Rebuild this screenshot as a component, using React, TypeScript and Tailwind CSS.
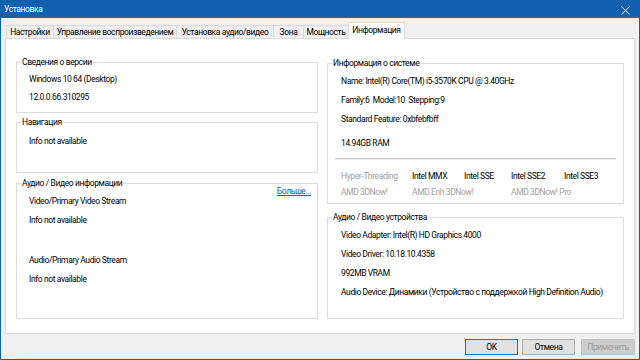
import type { ReactNode } from 'react';

const tabs = [
  { label: 'Настройки', w: 'w-[48px]' },
  { label: 'Управление воспроизведением', w: 'w-[124px]' },
  { label: 'Установка аудио/видео', w: 'w-[98px]' },
  { label: 'Зона', w: 'w-[31px]' },
  { label: 'Мощность', w: 'w-[46px]' },
];

const GroupBox = ({
  title,
  className,
  children,
}: {
  title: string;
  className: string;
  children: ReactNode;
}) => (
  <fieldset className={`min-w-0 border border-[#dcdcdc] ${className}`}>
    <legend className="ml-[4px] px-[1px] leading-[14px]">{title}</legend>
    {children}
  </fieldset>
);

const Line = ({ children, h = 'h-[19px] leading-[19px]' }: { children: ReactNode; h?: string }) => (
  <div className={`${h} whitespace-nowrap`}>{children}</div>
);

export default function App() {
  return (
    <div className="flex h-[360px] w-[640px] flex-col overflow-hidden border border-[#1160ae] bg-[#f0f0f0] font-['Roboto','Liberation_Sans',sans-serif] text-[8.5px] tracking-[-0.4px] text-black">
      {/* title bar */}
      <div className="flex h-[17px] items-center justify-between bg-[#1160ae] pl-[3px] pr-[9px] text-white">
        <span>Установка</span>
        <svg width="9" height="9" viewBox="0 0 9 9" className="mt-[1px]">
          <path d="M0.5 0.5 L8.5 8.5 M8.5 0.5 L0.5 8.5" stroke="white" strokeWidth="1" />
        </svg>
      </div>

      <div className="flex flex-1 flex-col px-[4px] pt-[4px]">
        {/* tabs */}
        <div className="flex h-[16px] items-end pl-[1px]">
          {tabs.map((t, i) => (
            <div
              key={t.label}
              className={`${t.w} ${i > 0 ? '-ml-px' : ''} flex h-[13px] items-center justify-center border border-b-0 border-[#d9d9d9] bg-[#f0f0f0] whitespace-nowrap`}
            >
              {t.label}
            </div>
          ))}
          <div className="relative z-10 -mb-px -ml-px flex h-[17px] w-[57px] items-center justify-center border border-b-0 border-[#d9d9d9] bg-white pb-[2px]">
            Информация
          </div>
        </div>

        {/* panel */}
        <div className="flex h-[296px] gap-[9px] border border-[#d9d9d9] bg-white pl-[10px] pt-[16px]">
          <div className="flex w-[302px] flex-col">
            <GroupBox title="Сведения о версии" className="h-[58px]">
              <div className="pl-[12px] pt-[1px]">
                <Line h="h-[18px] leading-[18px]">Windows 10 64 (Desktop)</Line>
                <Line h="h-[18px] leading-[18px]">12.0.0.66.310295</Line>
              </div>
            </GroupBox>
            <GroupBox title="Навигация" className="mt-[2px] h-[58px]">
              <div className="pl-[12px] pt-[3px]">
                <Line h="h-[18px] leading-[18px]">Info not available</Line>
              </div>
            </GroupBox>
            <GroupBox title="Аудио / Видео информации" className="mt-[3px] h-[143px]">
              <div className="flex h-[2px] justify-end pr-[6px]">
                <a className="-mt-[4px] h-[10px] leading-[10px] text-[#0066cc] underline">Больше...</a>
              </div>
              <div className="pl-[12px]">
                <Line>Video/Primary Video Stream</Line>
                <Line>Info not available</Line>
                <div className="h-[21px]" />
                <Line>Audio/Primary Audio Stream</Line>
                <Line>Info not available</Line>
              </div>
            </GroupBox>
          </div>

          <div className="flex w-[297px] flex-col">
            <GroupBox title="Информация о системе" className="mt-[1px] h-[148px]">
              <div className="pl-[13px] pt-[2px]">
                <Line>Name: Intel(R) Core(TM) i5-3570K CPU @ 3.40GHz</Line>
                <Line>Family:6&nbsp; Model:10&nbsp; Stepping:9</Line>
                <Line>Standard Feature: 0xbfebfbff</Line>
                <div className="mt-[5px]">
                  <Line h="h-[18px] leading-[18px]">14.94GB RAM</Line>
                </div>
              </div>
              <div className="mx-[7px] mt-[6px] h-[2px] border-t border-b border-t-[#c8c8c8] border-b-[#ececec]" />
              <div className="grid grid-cols-[71px_52px_47px_53px_1fr] pl-[13px] pt-[8px] leading-[16px]">
                <span className="text-[#a0a0a0]">Hyper-Threading</span>
                <span>Intel MMX</span>
                <span>Intel SSE</span>
                <span>Intel SSE2</span>
                <span>Intel SSE3</span>
                <span className="text-[#a0a0a0]">AMD 3DNow!</span>
                <span className="col-span-2 text-[#a0a0a0]">AMD Enh 3DNow!</span>
                <span className="col-span-2 text-[#a0a0a0]">AMD 3DNow! Pro</span>
              </div>
            </GroupBox>
            <GroupBox title="Аудио / Видео устройства" className="mt-[6px] h-[109px]">
              <div className="pl-[13px] pt-[2px]">
                <Line>Video Adapter: Intel(R) HD Graphics 4000</Line>
                <Line>Video Driver: 10.18.10.4358</Line>
                <Line>992MB VRAM</Line>
                <Line>Audio Device: Динамики (Устройство с поддержкой High Definition Audio)</Line>
              </div>
            </GroupBox>
          </div>
        </div>

        {/* buttons */}
        <div className="mt-[5px] flex h-[16px] justify-end">
          <button className="h-[16px] w-[53px] border border-[#0078d7] bg-[#e1e1e1] leading-[14px]">OK</button>
          <button className="ml-[4px] h-[16px] w-[53px] border border-[#adadad] bg-[#e1e1e1] leading-[14px]">Отмена</button>
          <button className="ml-[6px] h-[16px] w-[54px] border border-[#bfbfbf] bg-[#cccccc] leading-[14px] text-[#a0a0a0]">Применить</button>
        </div>
      </div>
    </div>
  );
}
